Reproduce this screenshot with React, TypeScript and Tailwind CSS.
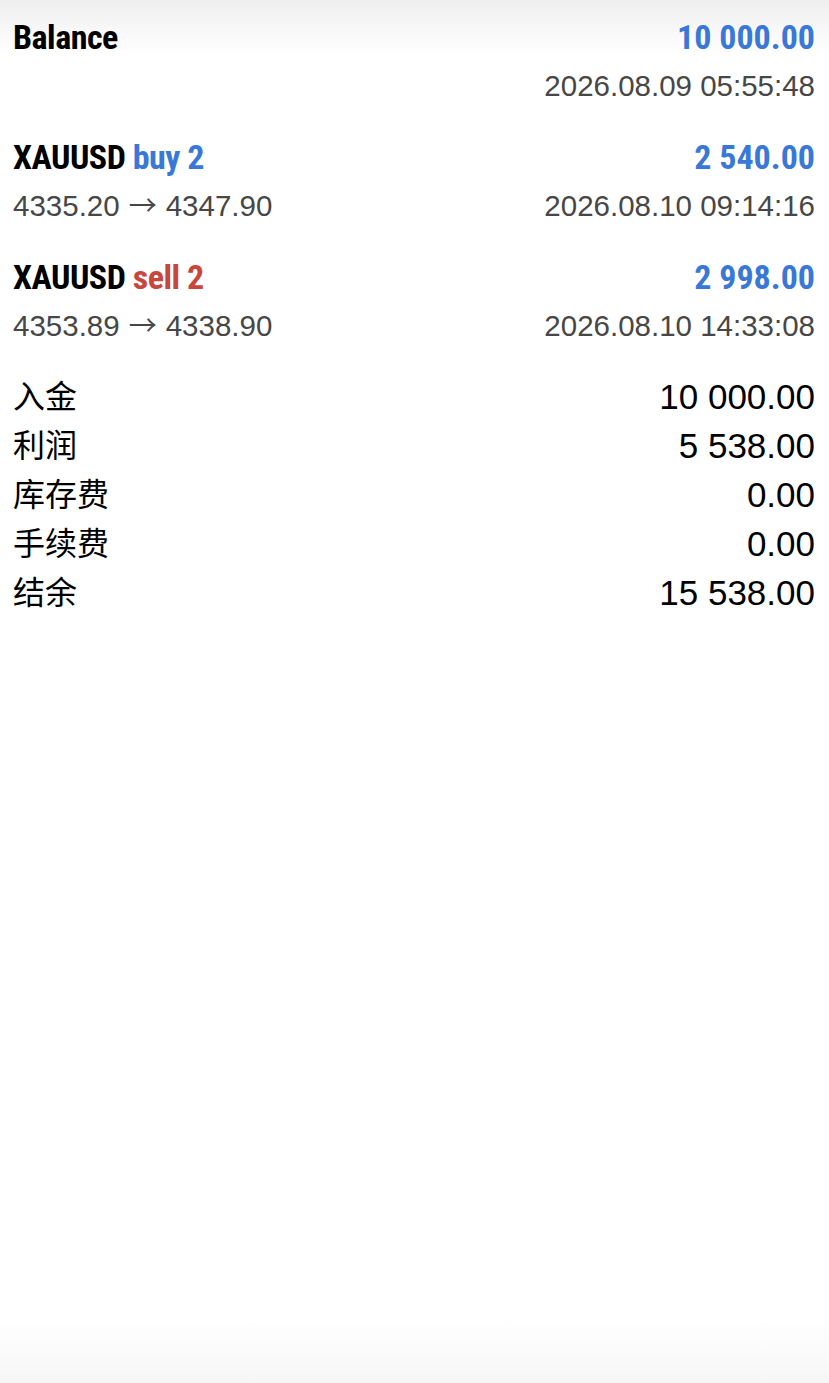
const heading = "font-['Roboto_Condensed','DejaVu_Sans_Condensed',Roboto,sans-serif] font-bold font-stretch-condensed text-[34px] leading-none";
const sub = "font-['Liberation_Sans',Arial,sans-serif] text-[29.5px] leading-none text-[#474747]";
const label = "font-['Noto_Sans_CJK_SC',sans-serif] text-[32px] leading-none text-black pb-[6px]";
const value = "font-['Liberation_Sans',Arial,sans-serif] text-[35px] leading-none text-black";

const deals = [
  { symbol: 'XAUUSD', side: 'buy 2', sideColor: 'text-[#3a78d8]', profit: '2 540.00', open: '4335.20', close: '4347.90', time: '2026.08.10 09:14:16' },
  { symbol: 'XAUUSD', side: 'sell 2', sideColor: 'text-[#c9463d]', profit: '2 998.00', open: '4353.89', close: '4338.90', time: '2026.08.10 14:33:08' },
];

const totals = [
  { label: '入金', value: '10 000.00' },
  { label: '利润', value: '5 538.00' },
  { label: '库存费', value: '0.00' },
  { label: '手续费', value: '0.00' },
  { label: '结余', value: '15 538.00' },
];

export default function App() {
  return (
    <div className="min-h-[1383px] w-full bg-[linear-gradient(to_bottom,#efefef_0px,#ffffff_55px,#ffffff_1320px,#f6f6f6_1383px)] pl-[13px] pr-[14px] pt-[12px] flex flex-col gap-[22px]">
      {/* balance */}
      <div className="flex flex-col">
        <div className="flex items-center justify-between h-[49px]">
          <span className={`${heading} tracking-[-0.5px] text-black`}>Balance</span>
          <span className={`${heading} text-[#3a78d8]`}>10 000.00</span>
        </div>
        <div className="flex items-center justify-end h-[49px]">
          <span className={sub}>2026.08.09 05:55:48</span>
        </div>
      </div>

      {/* deals */}
      {deals.map((d, i) => (
        <div key={i} className="flex flex-col">
          <div className="flex items-center justify-between h-[49px]">
            <span className={`${heading} tracking-[-0.5px] text-black`}>
              {d.symbol} <span className={d.sideColor}>{d.side}</span>
            </span>
            <span className={`${heading} text-[#3a78d8]`}>{d.profit}</span>
          </div>
          <div className="flex items-center justify-between h-[49px]">
            <span className={`${sub} flex items-center gap-[9px]`}>
              {d.open}
              <span className="font-['Noto_Sans_CJK_SC',sans-serif] text-[28px] leading-none pb-[3px]">→</span>
              {d.close}
            </span>
            <span className={sub}>{d.time}</span>
          </div>
        </div>
      ))}

      {/* totals */}
      <div className="flex flex-col">
        {totals.map(t => (
          <div key={t.label} className="flex items-center justify-between h-[49px]">
            <span className={label}>{t.label}</span>
            <span className={value}>{t.value}</span>
          </div>
        ))}
      </div>
    </div>
  );
}
